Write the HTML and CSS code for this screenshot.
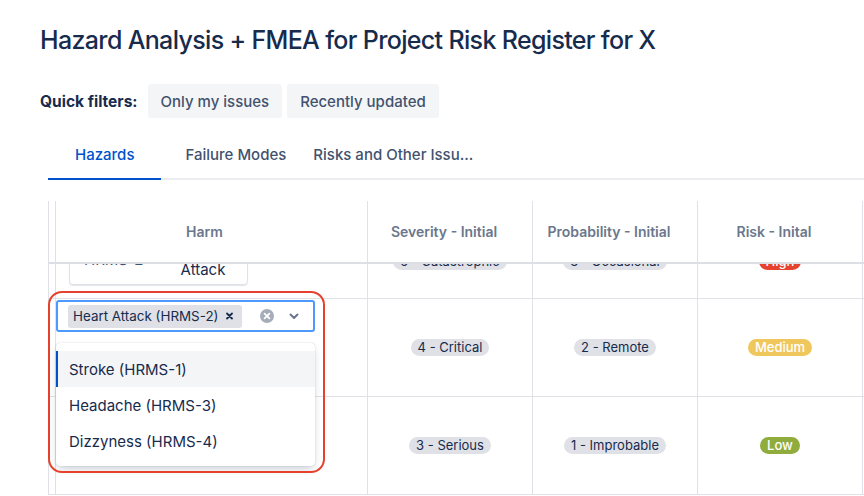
FILE: index.html
```html
<!DOCTYPE html>
<html lang="en">
<head>
<meta charset="utf-8">
<title>Hazard Analysis + FMEA</title>
<link rel="stylesheet" href="styles.css">
</head>
<body>
<div class="page">
  <h1 class="title">Hazard Analysis + FMEA for Project Risk Register for X</h1>

  <div class="filters">
    <span class="filters-label">Quick filters:</span>
    <button class="chip">Only my issues</button>
    <button class="chip">Recently updated</button>
  </div>

  <div class="tabs">
    <div class="tab tab-first active">Hazards</div>
    <div class="tab">Failure Modes</div>
    <div class="tab tab-last">Risks and Other Issu...</div>
  </div>

  <div class="grid">
    <!-- header -->
    <div class="cell head"></div>
    <div class="cell head">Harm</div>
    <div class="cell head">Severity - Initial</div>
    <div class="cell head">Probability - Initial</div>
    <div class="cell head">Risk - Inital</div>
    <div class="cell head"></div>

    <!-- clipped (scrolled) row -->
    <div class="cell clip"></div>
    <div class="cell clip clip-harm">
      <div class="card">
        <span class="card-key">HRMS-2</span>
        <span class="card-summary">Heart Attack</span>
      </div>
    </div>
    <div class="cell clip"><span class="badge">5 - Catastrophic</span></div>
    <div class="cell clip"><span class="badge">3 - Occasional</span></div>
    <div class="cell clip"><span class="badge lozenge high">High</span></div>
    <div class="cell clip"></div>

    <!-- row being edited -->
    <div class="cell row"></div>
    <div class="cell row edit">
      <div class="select">
        <div class="tag">
          <span class="tag-label">Heart Attack (HRMS-2)</span>
          <svg class="tag-remove" width="24" height="23" viewBox="0 0 24 23" aria-hidden="true">
            <path d="M9 8.5 L14 13.5 M14 8.5 L9 13.5" stroke="#172B4D" stroke-width="1.8" stroke-linecap="round"/>
          </svg>
        </div>
        <div class="indicators">
          <svg class="clear-icon" width="16" height="16" viewBox="0 0 16 16" aria-hidden="true">
            <circle cx="8" cy="8" r="7" fill="#A5ADBA"/>
            <path d="M5.6 5.6 L10.4 10.4 M10.4 5.6 L5.6 10.4" stroke="#fff" stroke-width="1.8" stroke-linecap="round"/>
          </svg>
          <svg class="chevron" width="14" height="14" viewBox="0 0 14 14" aria-hidden="true">
            <path d="M3.5 5.5 L7 9 L10.5 5.5" fill="none" stroke="#6B778C" stroke-width="2" stroke-linecap="round" stroke-linejoin="round"/>
          </svg>
        </div>
      </div>
      <div class="menu">
        <div class="option focused">Stroke (HRMS-1)</div>
        <div class="option">Headache (HRMS-3)</div>
        <div class="option">Dizzyness (HRMS-4)</div>
      </div>
      <div class="annotation"></div>
    </div>
    <div class="cell row"><span class="badge">4 - Critical</span></div>
    <div class="cell row"><span class="badge">2 - Remote</span></div>
    <div class="cell row"><span class="badge lozenge medium">Medium</span></div>
    <div class="cell row"></div>

    <!-- next row -->
    <div class="cell row"></div>
    <div class="cell row"></div>
    <div class="cell row"><span class="badge">3 - Serious</span></div>
    <div class="cell row"><span class="badge">1 - Improbable</span></div>
    <div class="cell row"><span class="badge lozenge low">Low</span></div>
    <div class="cell row"></div>
  </div>
</div>
</body>
</html>
```

FILE: styles.css
```css
html, body {
  margin: 0;
  padding: 0;
  background: #fff;
  overflow: hidden;
}
body {
  font-family: Inter, "Noto Sans", "Liberation Sans", sans-serif;
  color: #172B4D;
}
.page {
  padding-left: 40px;
  width: 860px;
}
.title {
  margin: 24px 0 0;
  font-size: 25px;
  line-height: 32px;
  font-weight: 500;
  color: #172B4D;
  letter-spacing: -0.66px;
}
.filters {
  margin-top: 28px;
  display: flex;
  align-items: center;
  gap: 5px;
}
.filters-label {
  font-size: 15.5px;
  font-weight: 700;
  margin-right: 7px;
}
.chip {
  font-family: inherit;
  font-size: 15px;
  font-weight: 500;
  color: #42526E;
  background: #F4F5F7;
  border: none;
  border-radius: 3px;
  height: 34px;
  padding: 0 13px;
}
.chip + .chip { margin-left: 0; }
.filters-label { margin-right: 5px; }
.tabs {
  margin-top: 13px;
  margin-left: 8px;
  display: flex;
  border-bottom: 2px solid #EBECF0;
  height: 47px;
}
.tab {
  font-size: 15px;
  font-weight: 500;
  color: #42526E;
  padding: 0 24px;
  display: flex;
  align-items: center;
  margin-bottom: -2px;
  border-bottom: 2px solid transparent;
}
.tab-first { padding: 0 27px; }
.tab-last { padding: 0 3px; }
.tab.active {
  color: #0052CC;
  border-bottom-color: #0052CC;
}
.grid {
  margin-top: 21px;
  margin-left: 8px;
  display: grid;
  grid-template-columns: 7px 312px 165px 165px 165px 20px;
}
.cell {
  box-sizing: border-box;
  border-left: 1px solid #DFE1E6;
  border-bottom: 1px solid #DFE1E6;
  display: flex;
  align-items: center;
  justify-content: center;
}
.head {
  height: 63px;
  border-bottom: 2px solid #DCDFE4;
  font-size: 14px;
  font-weight: 600;
  color: #6B778C;
  padding-right: 12px;
}
.head:nth-child(2) { padding-right: 14px; }
.clip {
  height: 35px;
  overflow: hidden;
  align-items: flex-end;
  padding-bottom: 28px;
}
.clip-harm {
  justify-content: flex-start;
  padding-bottom: 13px;
  padding-left: 13px;
}
.card {
  flex: none;
  width: 179px;
  box-sizing: border-box;
  border: 1px solid #DFE1E6;
  border-radius: 4px;
  box-shadow: 0 1px 1px rgba(9, 30, 66, 0.12);
  display: flex;
  align-items: center;
  padding: 0 0 4px 14px;
  font-size: 15px;
  line-height: 20px;
}
.card-key {
  flex: 1;
  color: #42526E;
}
.card-summary {
  width: 88px;
  text-align: center;
}
.row {
  height: 98px;
}
.edit {
  position: relative;
  align-items: flex-start;
  justify-content: flex-start;
  padding-top: 1px;
}
.badge {
  flex: none;
  display: inline-block;
  font-size: 13px;
  line-height: 17px;
  height: 17px;
  padding: 0 7px;
  border-radius: 9px;
  background: #DFE1E6;
  color: #172B4D;
  white-space: nowrap;
}
.lozenge {
  color: #fff;
  font-weight: 500;
}
.high { background: #E5432F; }
.medium { background: #F0C75C; }
.low { background: #8FAC3D; }

.select {
  width: 259px;
  height: 32px;
  box-sizing: border-box;
  border: 2px solid #4C9AFF;
  border-radius: 3px;
  display: flex;
  align-items: center;
  padding-left: 10px;
}
.tag {
  flex: none;
  display: flex;
  align-items: center;
  height: 23px;
  background: #DFE1E6;
  border-radius: 3px;
  font-size: 13.4px;
  color: #172B4D;
  padding-left: 5px;
  white-space: nowrap;
}
.tag-remove {
  display: block;
  flex: none;
}
.indicators {
  margin-left: auto;
  display: flex;
  align-items: center;
  gap: 12px;
  padding-right: 12px;
}
.clear-icon, .chevron { display: block; flex: none; }
.menu {
  position: absolute;
  left: 0;
  top: 44px;
  width: 259px;
  box-sizing: border-box;
  background: #fff;
  border-radius: 4px;
  box-shadow: 0 4px 8px -2px rgba(9, 30, 66, 0.25), 0 0 1px rgba(9, 30, 66, 0.31);
  padding: 8px 0 7px;
  z-index: 2;
}
.option {
  height: 36px;
  display: flex;
  align-items: center;
  padding-left: 11px;
  font-size: 15px;
  color: #172B4D;
  border-left: 2px solid transparent;
}
.option.focused {
  background: #F4F5F7;
  border-left-color: #0052CC;
}
.annotation {
  position: absolute;
  left: -8px;
  top: -8px;
  width: 277px;
  height: 182px;
  box-sizing: border-box;
  border: 2px solid #E5412D;
  border-radius: 14px;
  pointer-events: none;
  z-index: 3;
}
```
